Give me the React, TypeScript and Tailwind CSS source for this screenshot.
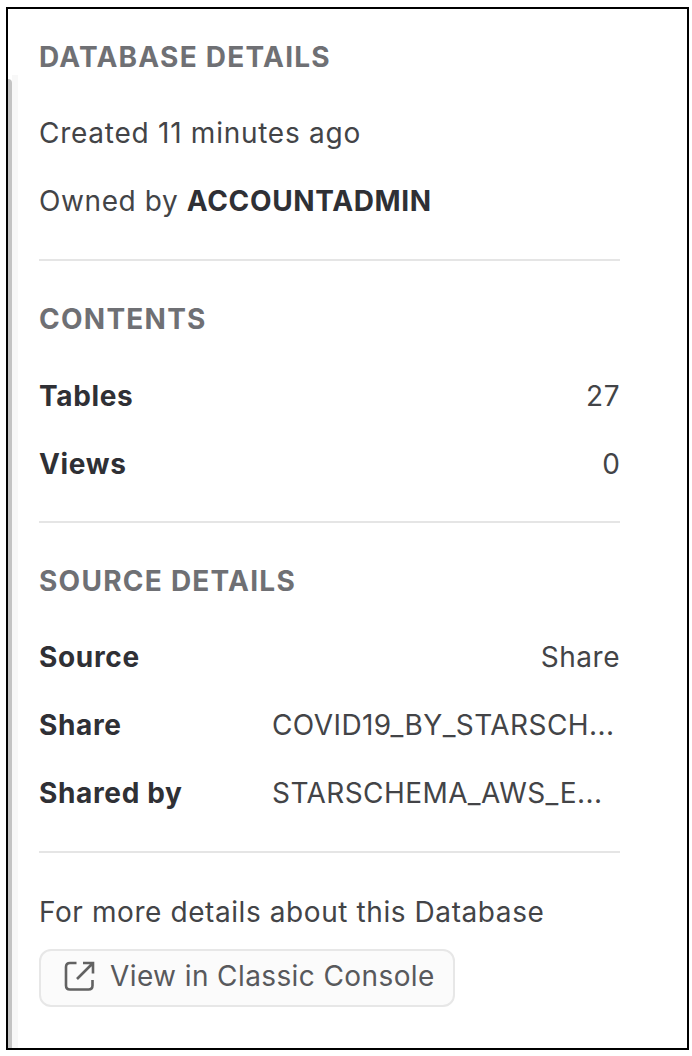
const heading = "text-[28px] leading-[34px] font-bold tracking-[1.25px] text-[#6f7074] whitespace-nowrap";
const row = "flex items-center justify-between h-[68px] whitespace-nowrap";
const strong = "font-bold tracking-[0.65px] text-[#2f3035]";
const rule = "border-t-2 border-[#e5e5e5]";
const clipped = "w-[348px] tracking-[0.42px]";

export default function App() {
  return (
    <div className="w-[692px] h-[1056px] bg-white pt-[7px] pl-[6px] font-['Inter',sans-serif]">
      <div className="flex w-[683px] h-[1043px] border-2 border-black">
        <div className="w-[10px] pt-[66px] flex shrink-0">
          <div className="w-[4px] mt-[4px] rounded-tr-[4px] bg-[#c4c4c4]" />
          <div className="w-[6px] bg-[#f8f8f8]" />
        </div>
        <main className="ml-[21px] w-[581px] pt-[31px] text-[28px] leading-[34px] text-[#434447]">
          <h2 className={heading}>DATABASE DETAILS</h2>
          <p className="mt-[42px] tracking-[0.74px]">Created 11 minutes ago</p>
          <p className="mt-[34px] tracking-[0.6px]">Owned by <span className={strong}>ACCOUNTADMIN</span></p>
          <hr className={rule + " mt-[41px]"} />
          <h2 className={heading + " mt-[41px]"}>CONTENTS</h2>
          <div className="mt-[26px]">
            <div className={row}><span className={strong}>Tables</span><span className="tracking-[0.5px]">27</span></div>
            <div className={row}><span className={strong}>Views</span><span>0</span></div>
          </div>
          <hr className={rule + " mt-[23px]"} />
          <h2 className={heading + " mt-[41px]"}>SOURCE DETAILS</h2>
          <div className="mt-[25px]">
            <div className={row}><span className={strong}>Source</span><span className="tracking-[0.5px]">Share</span></div>
            <div className={row}><span className={strong}>Share</span><span className={clipped}>COVID19_BY_STARSCH...</span></div>
            <div className={row}><span className={strong}>Shared by</span><span className={clipped}>STARSCHEMA_AWS_E...</span></div>
          </div>
          <hr className={rule + " mt-[24px]"} />
          <p className="mt-[42px] tracking-[0.58px]">For more details about this Database</p>
          <button className="mt-[20px] flex items-center w-[416px] h-[58px] rounded-[12px] border-2 border-[#e7e7e7] bg-[#fbfbfb] pl-[22px] pb-[4px] gap-[13px] whitespace-nowrap tracking-[0.4px] text-[#58595c]">
            <svg width="34" height="34" viewBox="0 0 34 34" fill="none" stroke="#626262" strokeWidth="2.6">
              <path d="M13.500 4H7Q3 4 3 8V26.500Q3 30.500 7 30.500H25.500Q29.500 30.500 29.500 26.500V21M20 4H30V14.500M30 4L14 20" />
            </svg>
            View in Classic Console
          </button>
        </main>
      </div>
    </div>
  );
}
